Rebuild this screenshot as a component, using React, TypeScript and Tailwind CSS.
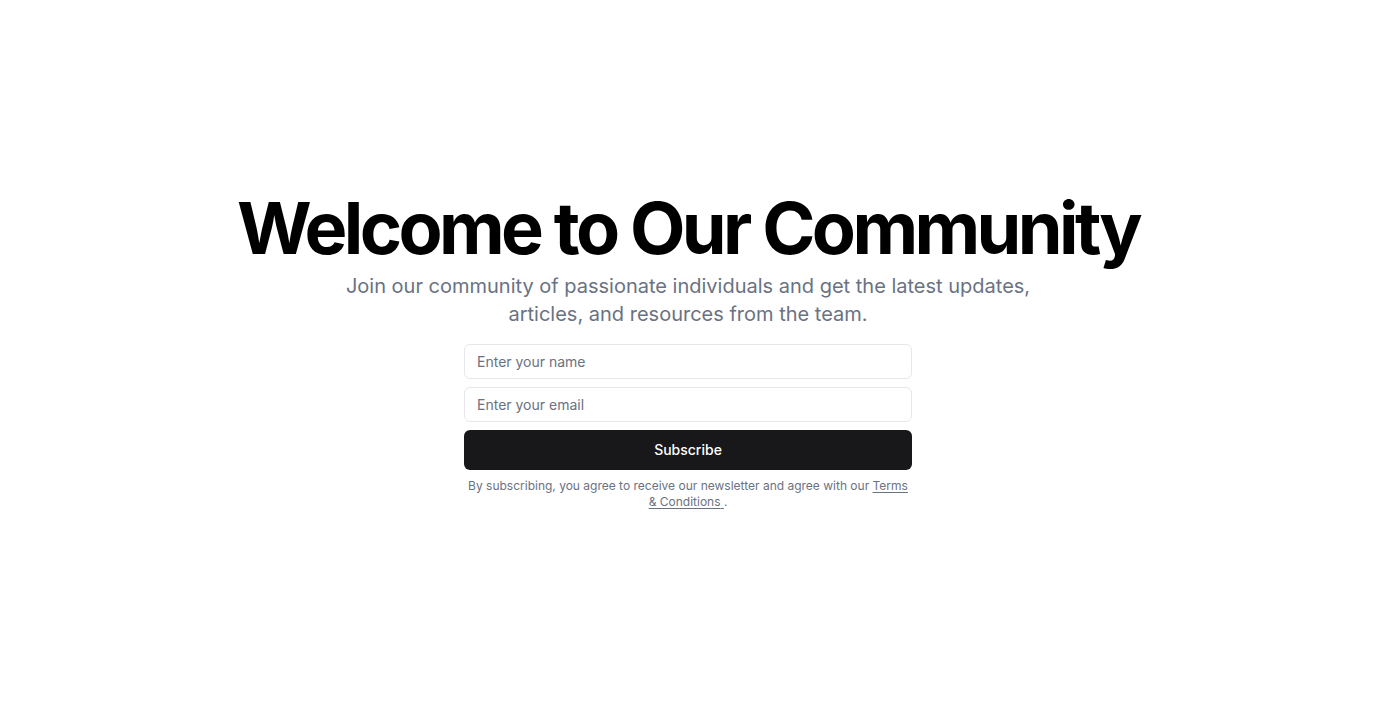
export default function App() {
  return (
    <div
      className="flex h-screen w-full items-center justify-center bg-white"
      style={{ fontFamily: "Inter, 'Noto Sans', sans-serif" }}
    >
      <div className="flex flex-col items-center text-center">
        <h1 className="text-7xl font-bold leading-none tracking-tighter text-black">
          Welcome to Our Community
        </h1>
        <p className="mt-2 max-w-[700px] text-xl text-gray-500">
          Join our community of passionate individuals and get the latest updates, articles, and resources from the team.
        </p>
        <div className="mt-4 flex w-[448px] flex-col gap-2">
          <input
            className="h-[35px] w-full rounded-md border border-gray-200 px-3 text-sm text-gray-900 placeholder:text-gray-500 outline-none"
            placeholder="Enter your name"
          />
          <input
            className="h-[35px] w-full rounded-md border border-gray-200 px-3 text-sm text-gray-900 placeholder:text-gray-500 outline-none"
            placeholder="Enter your email"
          />
          <button className="h-10 w-full rounded-md bg-[#18181b] text-sm font-medium text-white">
            Subscribe
          </button>
          <p className="text-xs text-gray-500">
            By subscribing, you agree to receive our newsletter and agree with our{" "}
            <a className="underline underline-offset-2" href="#">
              Terms &amp; Conditions{" "}
            </a>
            .
          </p>
        </div>
      </div>
    </div>
  );
}
